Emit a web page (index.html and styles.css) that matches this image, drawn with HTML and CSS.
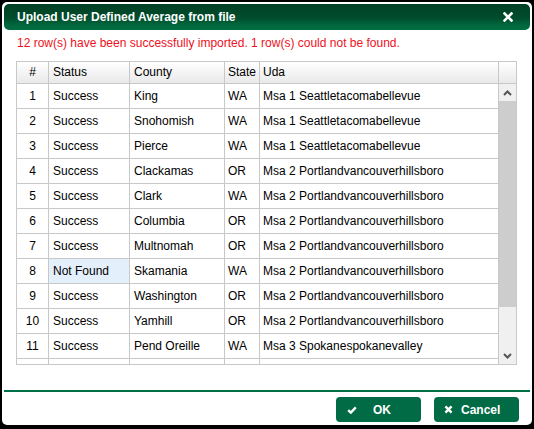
FILE: index.html
```html
<!DOCTYPE html>
<html>
<head>
<meta charset="utf-8">
<link rel="stylesheet" href="styles.css">
</head>
<body>
<div class="dialog">
  <div class="titlebar">
    <span class="title">Upload User Defined Average from file</span>
    <svg class="close" width="10" height="10" viewBox="0 0 10 10"><path d="M1.5 1.5 L8.5 8.5 M8.5 1.5 L1.5 8.5" stroke="#fff" stroke-width="2.6" stroke-linecap="square"/></svg>
  </div>
  <div class="message">12 row(s) have been successfully imported. 1 row(s) could not be found.</div>
  <div class="grid">
    <div class="hrow">
      <div class="c c-num">#</div>
      <div class="c c-status">Status</div>
      <div class="c c-county">County</div>
      <div class="c c-state">State</div>
      <div class="c c-uda">Uda</div>
      <div class="c c-sb"></div>
    </div>
    <div class="body">
      <div class="rows">
        <div class="row"><div class="c c-num">1</div><div class="c c-status">Success</div><div class="c c-county">King</div><div class="c c-state">WA</div><div class="c c-uda">Msa 1 Seattletacomabellevue</div></div>
        <div class="row"><div class="c c-num">2</div><div class="c c-status">Success</div><div class="c c-county">Snohomish</div><div class="c c-state">WA</div><div class="c c-uda">Msa 1 Seattletacomabellevue</div></div>
        <div class="row"><div class="c c-num">3</div><div class="c c-status">Success</div><div class="c c-county">Pierce</div><div class="c c-state">WA</div><div class="c c-uda">Msa 1 Seattletacomabellevue</div></div>
        <div class="row"><div class="c c-num">4</div><div class="c c-status">Success</div><div class="c c-county">Clackamas</div><div class="c c-state">OR</div><div class="c c-uda">Msa 2 Portlandvancouverhillsboro</div></div>
        <div class="row"><div class="c c-num">5</div><div class="c c-status">Success</div><div class="c c-county">Clark</div><div class="c c-state">WA</div><div class="c c-uda">Msa 2 Portlandvancouverhillsboro</div></div>
        <div class="row"><div class="c c-num">6</div><div class="c c-status">Success</div><div class="c c-county">Columbia</div><div class="c c-state">OR</div><div class="c c-uda">Msa 2 Portlandvancouverhillsboro</div></div>
        <div class="row"><div class="c c-num">7</div><div class="c c-status">Success</div><div class="c c-county">Multnomah</div><div class="c c-state">OR</div><div class="c c-uda">Msa 2 Portlandvancouverhillsboro</div></div>
        <div class="row"><div class="c c-num">8</div><div class="c c-status notfound">Not Found</div><div class="c c-county">Skamania</div><div class="c c-state">WA</div><div class="c c-uda">Msa 2 Portlandvancouverhillsboro</div></div>
        <div class="row"><div class="c c-num">9</div><div class="c c-status">Success</div><div class="c c-county">Washington</div><div class="c c-state">OR</div><div class="c c-uda">Msa 2 Portlandvancouverhillsboro</div></div>
        <div class="row"><div class="c c-num">10</div><div class="c c-status">Success</div><div class="c c-county">Yamhill</div><div class="c c-state">OR</div><div class="c c-uda">Msa 2 Portlandvancouverhillsboro</div></div>
        <div class="row"><div class="c c-num">11</div><div class="c c-status">Success</div><div class="c c-county">Pend Oreille</div><div class="c c-state">WA</div><div class="c c-uda">Msa 3 Spokanespokanevalley</div></div>
        <div class="row"><div class="c c-num"></div><div class="c c-status"></div><div class="c c-county"></div><div class="c c-state"></div><div class="c c-uda"></div></div>
      </div>
      <div class="scrollbar">
        <div class="sb-btn"><svg width="9" height="6" viewBox="0 0 9 6"><path d="M1 5 L4.5 1.5 L8 5" fill="none" stroke="#555" stroke-width="2"/></svg></div>
        <div class="sb-track"><div class="sb-thumb"></div></div>
        <div class="sb-btn"><svg width="9" height="6" viewBox="0 0 9 6"><path d="M1 1 L4.5 4.5 L8 1" fill="none" stroke="#555" stroke-width="2"/></svg></div>
      </div>
    </div>
  </div>
  <div class="footer">
    <button class="btn btn-ok"><svg width="10" height="8" viewBox="0 0 10 8"><path d="M1.2 4.2 L3.8 6.6 L8.8 1.4" fill="none" stroke="#fff" stroke-width="2.4"/></svg><span>OK</span></button>
    <button class="btn btn-cancel"><svg width="9" height="9" viewBox="0 0 9 9"><path d="M1.4 1.4 L7.6 7.6 M7.6 1.4 L1.4 7.6" stroke="#fff" stroke-width="2.4"/></svg><span>Cancel</span></button>
  </div>
</div>
</body>
</html>
```
FILE: styles.css
```css
html, body {
  margin: 0;
  padding: 0;
  background: #000;
  width: 534px;
  height: 429px;
  overflow: hidden;
}
.dialog {
  box-sizing: border-box;
  margin: 2px 0 0 2px;
  width: 530px;
  height: 423px;
  background: #fff;
  border-radius: 5px;
  padding: 2px 2px 0 2px;
  display: flex;
  flex-direction: column;
  font-family: "Liberation Sans", Arial, sans-serif;
  font-size: 12px;
}
.titlebar {
  height: 26px;
  border-radius: 5px;
  background: linear-gradient(to bottom, #003f24 0%, #004d2c 55%, #00673c 80%, #006f42 100%);
  display: flex;
  align-items: center;
  justify-content: space-between;
  padding: 0 17px 0 13px;
  color: #fff;
}
.title {
  font-weight: bold;
  font-size: 12px;
}
.close { display: block; }
.message {
  margin: 5px 0 0 13px;
  line-height: 16px;
  color: #ee1122;
}
.grid {
  box-sizing: border-box;
  margin: 10px 0 0 12px;
  width: 501px;
  height: 304px;
  border: 1px solid #c8c8c8;
  display: flex;
  flex-direction: column;
  color: #000;
}
.hrow {
  display: flex;
  height: 22px;
  box-sizing: border-box;
  border-bottom: 1px solid #c8c8c8;
  background: linear-gradient(to bottom, #ffffff, #e9e9e9);
  flex: none;
}
.c {
  box-sizing: border-box;
  border-right: 1px solid #c8c8c8;
  padding-left: 4px;
  white-space: nowrap;
  overflow: hidden;
}
.hrow .c { line-height: 21px; }
.c-num { width: 32px; text-align: center; padding-left: 0; }
.c-status { width: 81px; }
.c-county { width: 95px; }
.c-state { width: 35px; padding-left: 3px; }
.c-uda { width: 239px; padding-left: 3px; }
.c-sb { width: 17px; border-right: none; }
.body {
  display: flex;
  flex: 1;
  overflow: hidden;
}
.rows {
  width: 482px;
  overflow: hidden;
}
.row {
  display: flex;
  height: 25px;
  box-sizing: border-box;
  border-bottom: 1px solid #c8c8c8;
}
.row .c { line-height: 24px; }
.notfound { background: #e3effb; }
.scrollbar {
  width: 17px;
  background: #f0f0f0;
  display: flex;
  flex-direction: column;
}
.sb-btn {
  height: 17px;
  display: flex;
  align-items: center;
  justify-content: center;
  flex: none;
}
.sb-track {
  flex: 1;
}
.sb-thumb {
  height: 206px;
  background: #cdcdcd;
}
.footer {
  margin-top: 25px;
  border-top: 2px solid #007146;
  display: flex;
  justify-content: flex-end;
  gap: 13px;
  padding: 5px 11px 0 0;
}
.btn {
  width: 85px;
  height: 25px;
  border: none;
  border-radius: 4px;
  background: #006b45;
  color: #fff;
  font-family: "Liberation Sans", Arial, sans-serif;
  font-weight: bold;
  font-size: 12px;
  display: flex;
  align-items: center;
  padding: 0;
}
.btn-ok svg { margin-left: 11px; }
.btn-ok span { margin-left: 16px; }
.btn-cancel svg { margin-left: 10px; }
.btn-cancel span { margin-left: 8px; }
```
